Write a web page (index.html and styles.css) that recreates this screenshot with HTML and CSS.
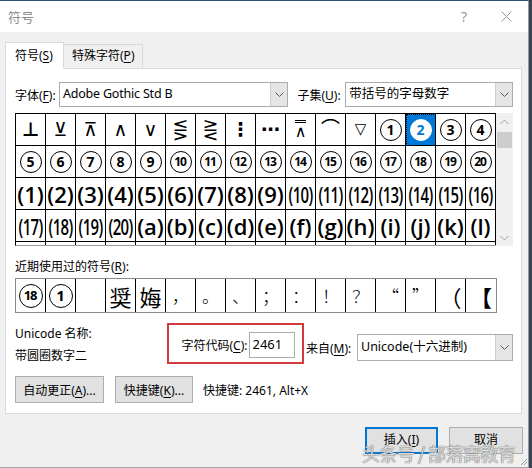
FILE: index.html
```html
<!DOCTYPE html>
<html lang="zh-CN">
<head>
    <meta charset="UTF-8">
    <title>符号</title>
    <link rel="stylesheet" href="styles.css">
</head>
<body>
    <div class="dialog">
        <div class="title-bar">
            <span class="title">符号</span>
            <span class="help">?</span>
            <span class="close">
                <svg width="11" height="11" viewBox="0 0 11 11"><path d="M0.5 0.5 L10.5 10.5 M10.5 0.5 L0.5 10.5" stroke="#9a9a9a" stroke-width="1" fill="none"/></svg>
            </span>
        </div>

        <div class="dialog-body">
            <div class="tabs">
                <div class="tab active">符号(<u>S</u>)</div>
                <div class="tab">特殊字符(<u>P</u>)</div>
            </div>

            <div class="panel">
                <!-- font / subset -->
                <div class="font-row">
                    <span class="lbl lbl-font">字体(<u>F</u>):</span>
                    <div class="combo combo-font">
                        <span class="combo-text">Adobe Gothic Std B</span>
                        <span class="combo-arrow"><svg width="9" height="6" viewBox="0 0 9 6"><path d="M0.5 0.5 L4.5 4.5 L8.5 0.5" stroke="#5a5a5a" fill="none"/></svg></span>
                    </div>
                    <span class="lbl lbl-subset">子集(<u>U</u>):</span>
                    <div class="combo combo-subset">
                        <span class="combo-text">带括号的字母数字</span>
                        <span class="combo-arrow"><svg width="9" height="6" viewBox="0 0 9 6"><path d="M0.5 0.5 L4.5 4.5 L8.5 0.5" stroke="#5a5a5a" fill="none"/></svg></span>
                    </div>
                </div>

                <!-- symbol table -->
                <div class="symbol-area">
                    <div class="symbol-grid">
                        <div class="cell"><span class="sym heavy">⊥</span></div>
                        <div class="cell"><span class="sym">⊻</span></div>
                        <div class="cell"><span class="sym">⊼</span></div>
                        <div class="cell"><span class="sym">∧</span></div>
                        <div class="cell"><span class="sym">∨</span></div>
                        <div class="cell"><span class="sym">⋚</span></div>
                        <div class="cell"><span class="sym">⋛</span></div>
                        <div class="cell"><span class="sym heavy">⋮</span></div>
                        <div class="cell"><span class="sym heavy">⋯</span></div>
                        <div class="cell"><span class="sym bar2">∧</span></div>
                        <div class="cell"><span class="sym">⌒</span></div>
                        <div class="cell"><span class="sym small">▽</span></div>
                        <div class="cell"><span class="circ">1</span></div>
                        <div class="cell selected"><span class="circ inv">2</span></div>
                        <div class="cell"><span class="circ">3</span></div>
                        <div class="cell"><span class="circ">4</span></div>

                        <div class="cell"><span class="circ">5</span></div>
                        <div class="cell"><span class="circ">6</span></div>
                        <div class="cell"><span class="circ">7</span></div>
                        <div class="cell"><span class="circ">8</span></div>
                        <div class="cell"><span class="circ">9</span></div>
                        <div class="cell"><span class="circ two">10</span></div>
                        <div class="cell"><span class="circ two">11</span></div>
                        <div class="cell"><span class="circ two">12</span></div>
                        <div class="cell"><span class="circ two">13</span></div>
                        <div class="cell"><span class="circ two">14</span></div>
                        <div class="cell"><span class="circ two">15</span></div>
                        <div class="cell"><span class="circ two">16</span></div>
                        <div class="cell"><span class="circ two">17</span></div>
                        <div class="cell"><span class="circ two">18</span></div>
                        <div class="cell"><span class="circ two">19</span></div>
                        <div class="cell"><span class="circ two">20</span></div>

                        <div class="cell"><span class="paren">(1)</span></div>
                        <div class="cell"><span class="paren">(2)</span></div>
                        <div class="cell"><span class="paren">(3)</span></div>
                        <div class="cell"><span class="paren">(4)</span></div>
                        <div class="cell"><span class="paren">(5)</span></div>
                        <div class="cell"><span class="paren">(6)</span></div>
                        <div class="cell"><span class="paren">(7)</span></div>
                        <div class="cell"><span class="paren">(8)</span></div>
                        <div class="cell"><span class="paren">(9)</span></div>
                        <div class="cell"><span class="paren two">(10)</span></div>
                        <div class="cell"><span class="paren two">(11)</span></div>
                        <div class="cell"><span class="paren two">(12)</span></div>
                        <div class="cell"><span class="paren two">(13)</span></div>
                        <div class="cell"><span class="paren two">(14)</span></div>
                        <div class="cell"><span class="paren two">(15)</span></div>
                        <div class="cell"><span class="paren two">(16)</span></div>

                        <div class="cell"><span class="paren two">(17)</span></div>
                        <div class="cell"><span class="paren two">(18)</span></div>
                        <div class="cell"><span class="paren two">(19)</span></div>
                        <div class="cell"><span class="paren two">(20)</span></div>
                        <div class="cell"><span class="paren">(a)</span></div>
                        <div class="cell"><span class="paren">(b)</span></div>
                        <div class="cell"><span class="paren">(c)</span></div>
                        <div class="cell"><span class="paren">(d)</span></div>
                        <div class="cell"><span class="paren">(e)</span></div>
                        <div class="cell"><span class="paren">(f)</span></div>
                        <div class="cell"><span class="paren">(g)</span></div>
                        <div class="cell"><span class="paren">(h)</span></div>
                        <div class="cell"><span class="paren">(i)</span></div>
                        <div class="cell"><span class="paren">(j)</span></div>
                        <div class="cell"><span class="paren">(k)</span></div>
                        <div class="cell"><span class="paren">(l)</span></div>

                        <div class="cell"></div><div class="cell"></div><div class="cell"></div><div class="cell"></div>
                        <div class="cell"></div><div class="cell"></div><div class="cell"></div><div class="cell"></div>
                        <div class="cell"></div><div class="cell"></div><div class="cell"></div><div class="cell"></div>
                        <div class="cell"></div><div class="cell"></div><div class="cell"></div><div class="cell"></div>
                    </div>
                    <div class="scrollbar">
                        <span class="sb-arrow"><svg width="9" height="6" viewBox="0 0 9 6"><path d="M0.5 5 L4.5 1 L8.5 5" stroke="#a0a0a0" fill="none"/></svg></span>
                        <span class="sb-thumb"></span>
                        <span class="sb-space"></span>
                        <span class="sb-arrow"><svg width="9" height="6" viewBox="0 0 9 6"><path d="M0.5 1 L4.5 5 L8.5 1" stroke="#a0a0a0" fill="none"/></svg></span>
                    </div>
                </div>

                <!-- recently used -->
                <div class="recent-label">近期使用过的符号(<u>R</u>):</div>
                <div class="recent-row">
                    <div class="rcell"><span class="circ big two">18</span></div>
                    <div class="rcell"><span class="circ big">1</span></div>
                    <div class="rcell"></div>
                    <div class="rcell">奨</div>
                    <div class="rcell">娒</div>
                    <div class="rcell punct">，</div>
                    <div class="rcell punct">。</div>
                    <div class="rcell punct">、</div>
                    <div class="rcell punct">；</div>
                    <div class="rcell punct">：</div>
                    <div class="rcell punct">！</div>
                    <div class="rcell punct">？</div>
                    <div class="rcell punct">“</div>
                    <div class="rcell punct">”</div>
                    <div class="rcell">（</div>
                    <div class="rcell heavy">【</div>
                </div>

                <!-- char info -->
                <div class="info-row">
                    <div class="name-col">
                        <div>Unicode 名称:</div>
                        <div>带圆圈数字二</div>
                    </div>
                    <div class="code-box">
                        <span class="lbl">字符代码(<u>C</u>):</span>
                        <span class="code-input">2461</span>
                    </div>
                    <div class="from-group">
                        <span class="lbl">来自(<u>M</u>):</span>
                        <div class="combo combo-from">
                            <span class="combo-text">Unicode(十六进制)</span>
                            <span class="combo-arrow"><svg width="9" height="6" viewBox="0 0 9 6"><path d="M0.5 0.5 L4.5 4.5 L8.5 0.5" stroke="#5a5a5a" fill="none"/></svg></span>
                        </div>
                    </div>
                </div>

                <div class="button-row">
                    <button class="btn btn-auto">自动更正(<u>A</u>)...</button>
                    <button class="btn btn-key">快捷键(<u>K</u>)...</button>
                    <span class="shortcut">快捷键: 2461, Alt+X</span>
                </div>
            </div>

            <div class="dialog-buttons">
                <button class="btn btn-insert">插入(<u>I</u>)</button>
                <button class="btn btn-cancel">取消</button>
            </div>
        </div>

        <div class="watermark">头条号 / 部落窝教育</div>
        <svg class="grip" width="9" height="9" viewBox="0 0 9 9"><path d="M8 2 L2 8 M8 5 L5 8" stroke="#9a9a9a" fill="none"/></svg>
    </div>
</body>
</html>
```

FILE: styles.css
```css
body {
    margin: 0;
    width: 532px;
    height: 468px;
    overflow: hidden;
    background-color: #3a4350;
    font-family: "Noto Sans", "Noto Sans CJK SC", sans-serif;
    font-size: 12px;
    color: #000;
}
u {
    text-decoration-thickness: 1px;
    text-underline-offset: 2px;
}
.dialog {
    position: relative;
    width: 528px;
    height: 466px;
    background-color: #f0f0f0;
    border-top: 1px solid #2d4f73;
    border-right: 1px solid #9a9a9a;
    border-bottom: 1px solid #a8a8a8;
}
.title-bar {
    display: flex;
    align-items: center;
    height: 31px;
    padding: 0 16px 0 8px;
    background-color: #fff;
}
.title {
    font-size: 13px;
    color: #8a8a8a;
}
.help {
    margin-left: auto;
    font-size: 14px;
    color: #9a9a9a;
}
.close {
    display: flex;
    margin-left: 34px;
}
.dialog-body {
    padding: 10px 5px 0 5px;
}
.tabs {
    display: flex;
    align-items: flex-end;
    height: 27px;
    margin-bottom: -1px;
}
.tab {
    box-sizing: border-box;
    height: 25px;
    padding: 0 8px;
    border: 1px solid #d9d9d9;
    border-left: none;
    line-height: 22px;
    background-color: #f0f0f0;
}
.tab.active {
    height: 27px;
    width: 59px;
    padding: 0 0 0 9px;
    line-height: 26px;
    border-left: 1px solid #d9d9d9;
    border-bottom-color: #fff;
    background-color: #fff;
}
.panel {
    box-sizing: border-box;
    width: 517px;
    height: 346px;
    padding: 13px 8px 0 9px;
    border: 1px solid #d9d9d9;
    background-color: #fff;
}
.font-row {
    display: flex;
    align-items: center;
    height: 25px;
}
.lbl-font {
    width: 44px;
}
.lbl-subset {
    width: 48px;
    margin-left: 9px;
}
.combo {
    box-sizing: border-box;
    display: flex;
    align-items: stretch;
    height: 25px;
    border: 1px solid #acacac;
    background-color: #fff;
}
.combo-text {
    flex: 1;
    padding-left: 3px;
    line-height: 22px;
    white-space: nowrap;
    font-size: 12.5px;
}
.combo-arrow {
    display: flex;
    align-items: center;
    justify-content: center;
    width: 16px;
    background-color: #e5e5e5;
    border-left: 1px solid #cfcfcf;
}
.combo-font {
    width: 230px;
}
.combo-font .combo-text {
    letter-spacing: -0.2px;
}
.combo-subset {
    width: 168px;
}
.symbol-area {
    display: flex;
    margin-top: 6px;
}
.symbol-grid {
    box-sizing: border-box;
    display: grid;
    grid-template-columns: repeat(16, 30px);
    grid-auto-rows: 32px;
    width: 481px;
    height: 133px;
    overflow: hidden;
    border-top: 1px solid #000;
    border-left: 1px solid #000;
    border-bottom: 1px solid #9a9a9a;
}
.cell {
    box-sizing: border-box;
    display: flex;
    align-items: center;
    justify-content: center;
    border-right: 1px solid #000;
    border-bottom: 1px solid #000;
    overflow: hidden;
}
.cell.selected {
    background-color: #0078d7;
    outline: 1px dotted #000;
    outline-offset: -1px;
}
.sym {
    font-family: "DejaVu Sans", sans-serif;
    font-size: 19px;
    line-height: 1;
}
.sym.heavy {
    font-weight: bold;
}
.sym.small {
    font-size: 15px;
}
.sym.bar2 {
    padding-top: 1px;
    font-size: 16px;
    border-top: 3px double #000;
}
.circ {
    box-sizing: border-box;
    display: flex;
    align-items: center;
    justify-content: center;
    width: 22px;
    height: 22px;
    border: 1.3px solid #000;
    border-radius: 50%;
    font-family: "Open Sans", sans-serif;
    font-weight: bold;
    font-size: 14px;
    line-height: 1;
}
.circ.two {
    font-size: 12px;
    letter-spacing: -1.2px;
    text-indent: -1px;
}
.circ.inv {
    background-color: #fff;
    border-color: #fff;
    color: #0078d7;
}
.circ.big {
    width: 24px;
    height: 24px;
    font-size: 15px;
}
.circ.big.two {
    font-size: 13px;
}
.paren {
    font-family: "Open Sans", sans-serif;
    font-weight: 600;
    font-size: 22px;
    line-height: 1;
    white-space: nowrap;
}
.paren.two {
    transform: scaleX(0.68);
    letter-spacing: -1px;
}
.scrollbar {
    display: flex;
    flex-direction: column;
    width: 17px;
    height: 133px;
    background-color: #f0f0f0;
}
.sb-arrow {
    display: flex;
    align-items: center;
    justify-content: center;
    height: 17px;
}
.sb-thumb {
    height: 16px;
    margin: 2px 1px 0 1px;
    background-color: #cdcdcd;
}
.sb-space {
    flex: 1;
}
.recent-label {
    margin-top: 13px;
    line-height: 16px;
}
.recent-row {
    box-sizing: border-box;
    display: grid;
    grid-template-columns: repeat(16, 30px);
    width: 482px;
    height: 35px;
    margin-top: 3px;
    border: 1px solid #8a8a8a;
}
.rcell {
    box-sizing: border-box;
    display: flex;
    align-items: center;
    justify-content: center;
    border-right: 1px solid #000;
    font-family: "Noto Sans CJK SC", sans-serif;
    font-size: 22px;
    line-height: 1;
}
.rcell.punct {
    font-size: 17px;
    font-weight: 300;
}
.rcell.heavy {
    font-weight: bold;
}
.rcell:last-child {
    border-right: none;
}
.info-row {
    display: flex;
    align-items: flex-start;
    height: 45px;
    margin-top: 10px;
}
.name-col {
    width: 153px;
    line-height: 22px;
}
.code-box {
    box-sizing: border-box;
    display: flex;
    align-items: center;
    width: 137px;
    height: 41px;
    padding: 3px 0 0 12px;
    border: 2px solid #d33a3e;
}
.code-input {
    box-sizing: border-box;
    width: 46px;
    height: 26px;
    margin-left: 2px;
    padding-left: 2px;
    border: 1px solid #acacac;
    line-height: 22px;
    font-size: 13px;
}
.from-group {
    display: flex;
    align-items: center;
    margin: 11px 0 0 2px;
}
.from-group .lbl {
    width: 51px;
}
.combo-from {
    width: 156px;
    height: 27px;
}
.combo-from .combo-text {
    line-height: 24px;
}
.button-row {
    display: flex;
    align-items: center;
    margin-top: 8px;
}
.btn {
    box-sizing: border-box;
    height: 27px;
    padding: 0;
    border: 1px solid #adadad;
    background-color: #e1e1e1;
    font-family: "Noto Sans", "Noto Sans CJK SC", sans-serif;
    font-size: 12px;
    color: #000;
}
.btn-auto {
    width: 89px;
}
.btn-key {
    width: 78px;
    margin-left: 11px;
}
.shortcut {
    margin-left: 10px;
}
.dialog-buttons {
    display: flex;
    justify-content: flex-end;
    margin-top: 13px;
}
.btn-insert {
    width: 73px;
    padding-bottom: 4px;
    border: 2px solid #0078d7;
}
.btn-cancel {
    width: 74px;
    padding-bottom: 4px;
    margin-left: 11px;
}
.watermark {
    position: absolute;
    left: 362px;
    top: 439px;
    font-family: "Noto Sans CJK SC", sans-serif;
    font-size: 18px;
    letter-spacing: -0.5px;
    color: rgba(255, 255, 255, 0.75);
    text-shadow: 0 0 1px #666, 0 0 1px #666;
}
.grip {
    position: absolute;
    right: 0;
    bottom: 1px;
}
```
